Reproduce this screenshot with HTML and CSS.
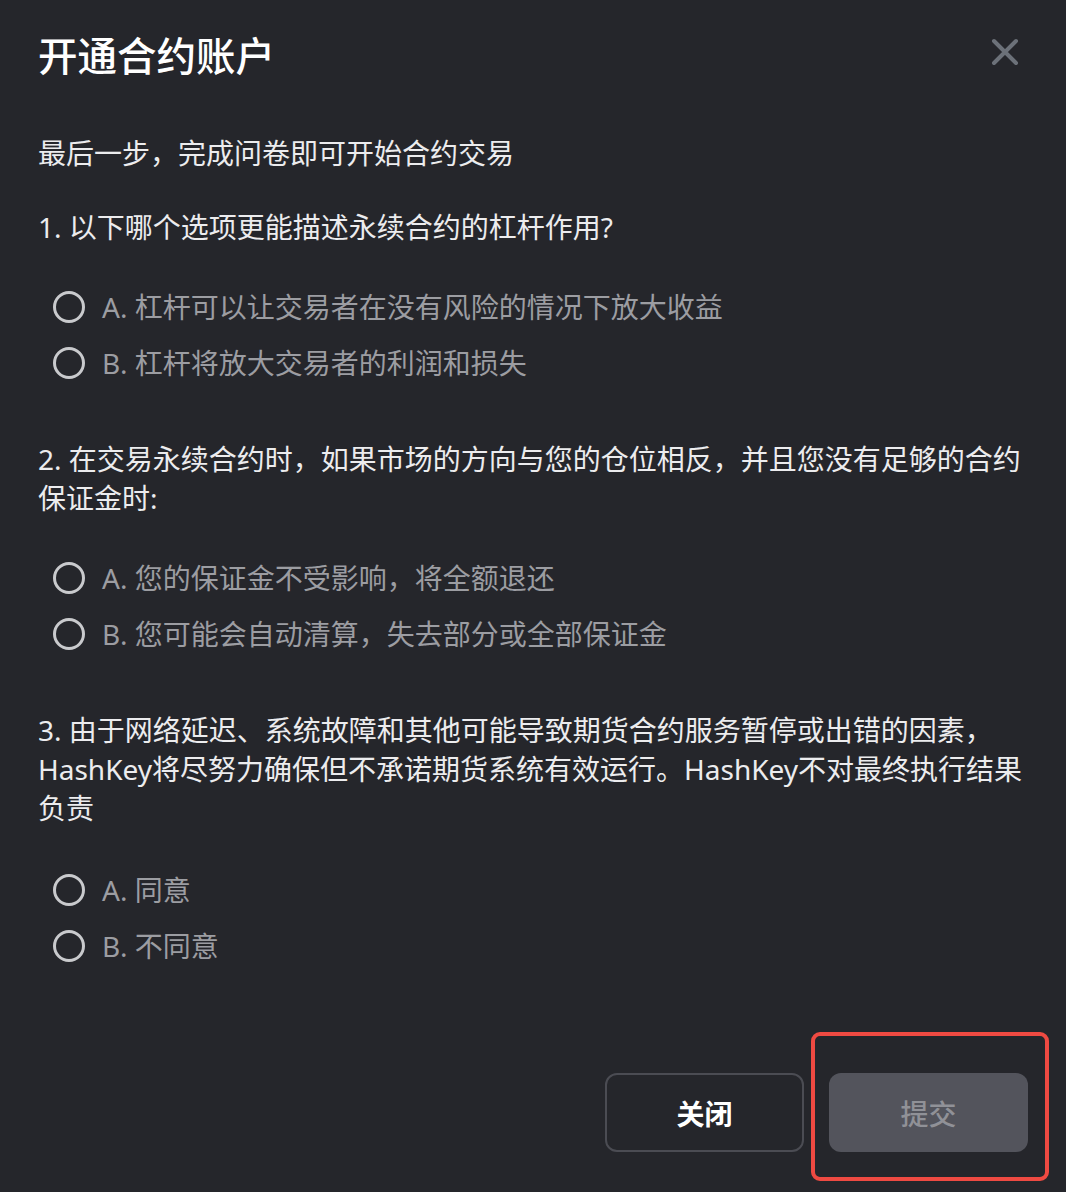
FILE: index.html
```html
<!DOCTYPE html>
<html lang="zh-CN">
<head>
<meta charset="utf-8">
<title>开通合约账户</title>
<link rel="stylesheet" href="styles.css">
</head>
<body>
<div class="modal">
  <div class="modal-header">
    <h1 class="modal-title">开通合约账户</h1>
    <button class="close-btn" aria-label="关闭">
      <svg width="28" height="28" viewBox="0 0 28 28"><path d="M3 3 L25 25 M25 3 L3 25" stroke="#6c7179" stroke-width="4" stroke-linecap="round" fill="none"/></svg>
    </button>
  </div>
  <p class="intro">最后一步，完成问卷即可开始合约交易</p>

  <div class="question">
    <p class="q-text">1. 以下哪个选项更能描述永续合约的杠杆作用?</p>
    <ul class="options">
      <li class="option"><span class="radio"></span><span class="opt-text">A. 杠杆可以让交易者在没有风险的情况下放大收益</span></li>
      <li class="option"><span class="radio"></span><span class="opt-text">B. 杠杆将放大交易者的利润和损失</span></li>
    </ul>
  </div>

  <div class="question">
    <p class="q-text">2. 在交易永续合约时，如果市场的方向与您的仓位相反，并且您没有足够的合约保证金时:</p>
    <ul class="options">
      <li class="option"><span class="radio"></span><span class="opt-text">A. 您的保证金不受影响，将全额退还</span></li>
      <li class="option"><span class="radio"></span><span class="opt-text">B. 您可能会自动清算，失去部分或全部保证金</span></li>
    </ul>
  </div>

  <div class="question q3">
    <p class="q-text">3. 由于网络延迟、系统故障和其他可能导致期货合约服务暂停或出错的因素，HashKey将尽努力确保但不承诺期货系统有效运行。HashKey不对最终执行结果负责</p>
    <ul class="options">
      <li class="option"><span class="radio"></span><span class="opt-text">A. 同意</span></li>
      <li class="option"><span class="radio"></span><span class="opt-text">B. 不同意</span></li>
    </ul>
  </div>

  <div class="modal-footer">
    <button class="btn btn-outline">关闭</button>
    <div class="submit-wrap">
      <button class="btn btn-disabled">提交</button>
      <span class="highlight"></span>
    </div>
  </div>
</div>
</body>
</html>
```

FILE: styles.css
```css
html, body {
  margin: 0;
  padding: 0;
  background: #25262b;
}
body {
  font-family: "Noto Sans", "Noto Sans CJK SC", sans-serif;
  color: #ececee;
  width: 1066px;
  height: 1192px;
  overflow: hidden;
}
.modal {
  padding: 32px 28px 0 38px;
}
.modal-header {
  display: flex;
  align-items: center;
  justify-content: space-between;
  height: 48px;
}
.modal-title {
  margin: 0;
  font-size: 39.5px;
  line-height: 48px;
  font-weight: 500;
  color: #ffffff;
}
.close-btn {
  background: none;
  border: 0;
  padding: 0;
  margin: -8px 19px 0 0;
  width: 28px;
  height: 28px;
  display: flex;
  cursor: pointer;
}
.intro {
  margin: 54px 0 0 0;
  font-size: 28px;
  line-height: 39px;
  color: #ececee;
}
.question {
  margin-top: 35px;
}
.question + .question {
  margin-top: 49px;
}
.q3 .options {
  margin-top: 34px;
}
.q-text {
  margin: 0;
  font-size: 28px;
  line-height: 39px;
  color: #ececee;
}
.options {
  list-style: none;
  margin: 32px 0 0 0;
  padding: 0 0 0 15px;
}
.option {
  display: flex;
  align-items: center;
  height: 56px;
}
.radio {
  box-sizing: border-box;
  width: 32px;
  height: 32px;
  border: 3px solid #c9cacd;
  border-radius: 50%;
  flex: none;
}
.opt-text {
  margin-left: 17px;
  font-size: 28px;
  line-height: 39px;
  color: #9c9da2;
}
.modal-footer {
  display: flex;
  justify-content: flex-end;
  gap: 25px;
  margin-top: 99px;
  padding-right: 10px;
}
.btn {
  box-sizing: border-box;
  width: 199px;
  height: 79px;
  border-radius: 12px;
  font-family: "Noto Sans", "Noto Sans CJK SC", sans-serif;
  font-size: 28px;
  padding: 0;
}
.btn-outline {
  background: transparent;
  border: 2px solid #4b4c53;
  color: #ffffff;
  font-weight: 700;
}
.btn-disabled {
  background: #53545c;
  border: 0;
  color: #909197;
  font-weight: 500;
}
.submit-wrap {
  position: relative;
  display: flex;
}
.highlight {
  position: absolute;
  top: -41px;
  left: -18px;
  right: -21px;
  bottom: -29px;
  border: 4px solid #ef4a42;
  border-radius: 9px;
  pointer-events: none;
}
```
